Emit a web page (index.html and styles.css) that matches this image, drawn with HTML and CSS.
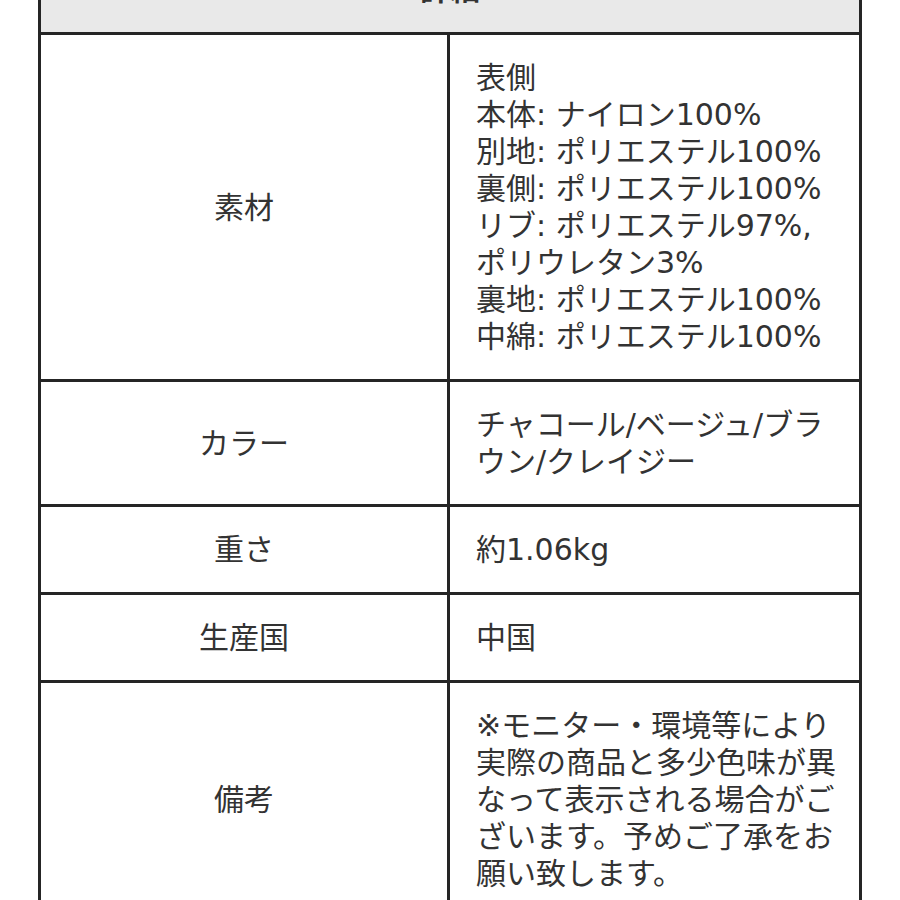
FILE: index.html
```html
<!DOCTYPE html>
<html lang="ja">
<head>
<meta charset="utf-8">
<title>詳細</title>
<link rel="stylesheet" href="styles.css">
</head>
<body>
<div class="spec">
  <div class="head">詳細</div>
  <div class="label">素材</div>
  <div class="value">表側<br>本体: ナイロン100%<br>別地: ポリエステル100%<br>裏側: ポリエステル100%<br>リブ: ポリエステル97%, ポリウレタン3%<br>裏地: ポリエステル100%<br>中綿: ポリエステル100%</div>
  <div class="label">カラー</div>
  <div class="value">チャコール/ベージュ/ブラウン/クレイジー</div>
  <div class="label">重さ</div>
  <div class="value">約1.06kg</div>
  <div class="label">生産国</div>
  <div class="value">中国</div>
  <div class="label">備考</div>
  <div class="value">※モニター・環境等により実際の商品と多少色味が異なって表示される場合がございます。予めご了承をお願い致します。</div>
</div>
</body>
</html>
```
FILE: styles.css
```css
html, body {
  margin: 0;
  background: #ffffff;
}
body {
  font-family: "DejaVu Sans", "Noto Sans CJK JP", sans-serif;
  font-size: 30px;
  line-height: 37px;
  color: #333333;
  overflow: hidden;
}
.spec {
  display: grid;
  grid-template-columns: 406px 409px;
  gap: 3px;
  padding: 3px;
  background: #252525;
  width: max-content;
  margin: -56px 0 0 38px;
}
.head {
  grid-column: 1 / span 2;
  background: #e9e9e9;
  text-align: center;
  font-weight: bold;
  padding: 24px;
}
.label {
  background: #ffffff;
  display: flex;
  align-items: center;
  justify-content: center;
  padding: 24px;
}
.value {
  background: #ffffff;
  padding: 24px 20px 24px 26px;
}
```
